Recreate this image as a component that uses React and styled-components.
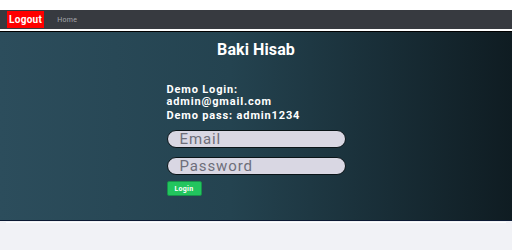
import React from "react";
import styled, { createGlobalStyle } from "styled-components";

const Global = createGlobalStyle`
  html, body {
    margin: 0;
    padding: 0;
    background: #f1f2f6;
    font-family: Roboto, "Liberation Sans", Arial, sans-serif;
  }
`;

const Top = styled.div`
  height: 10px;
  background: #ffffff;
`;

const Nav = styled.nav`
  height: 19px;
  background: #373a40;
  display: flex;
  align-items: center;
  padding: 0 7px;
  gap: 13px;
  border-bottom: 2px solid #ffffff;
`;

const LogoutButton = styled.button`
  background: #ff0000;
  color: #ffffff;
  border: none;
  height: 17px;
  padding: 0 2px;
  font-family: inherit;
  font-weight: 700;
  font-size: 10px;
  letter-spacing: 0.3px;
  cursor: pointer;
`;

const NavLink = styled.a`
  color: #a6a8ad;
  font-size: 7px;
  letter-spacing: 0.3px;
  text-decoration: none;
`;

const Hero = styled.section`
  height: 188px;
  background: linear-gradient(90deg, #2c4d5c 0%, #244350 45%, #0f1c22 100%);
  border-top: 1px solid #000000;
  border-bottom: 1px solid #0b1a33;
  display: flex;
  flex-direction: column;
  align-items: center;
  color: #ffffff;
`;

const Title = styled.h1`
  margin: 9px 0 0;
  font-size: 16px;
  font-weight: 700;
  line-height: 18px;
  letter-spacing: 0.1px;
`;

const Form = styled.form`
  width: 178px;
  margin: 25px 0 0 -1px;
  display: flex;
  flex-direction: column;
`;

const Info = styled.p`
  margin: 0 0 ${(p) => p.$gap}px;
  font-size: 11px;
  font-weight: 700;
  line-height: 12px;
  letter-spacing: 0.85px;
`;

const Field = styled.input`
  box-sizing: border-box;
  width: 179px;
  height: 18px;
  margin-top: ${(p) => p.$top}px;
  border-radius: 10px;
  border: 1px solid #0a1418;
  background: #d9d7e3;
  padding: 0 12px;
  font-family: inherit;
  font-size: 15px;
  letter-spacing: 0.9px;
  color: #333;
  outline: none;
  &::placeholder {
    color: #6e6e7a;
  }
`;

const Submit = styled.button`
  align-self: flex-start;
  margin-top: 6px;
  width: 35px;
  height: 15px;
  background: #22c55e;
  border: 1px solid #17934a;
  border-radius: 2px;
  color: #ffffff;
  font-family: inherit;
  font-size: 7px;
  font-weight: 700;
  letter-spacing: 0.3px;
  padding: 0;
`;

const Rule = styled.div`
  height: 1px;
  margin: 1px 6px 0;
  background: #ffffff;
  opacity: 0.8;
`;

export default function App() {
  return (
    <>
      <Global />
      <Top />
      <Nav>
        <LogoutButton>Logout</LogoutButton>
        <NavLink href="#">Home</NavLink>
      </Nav>
      <Hero>
        <Title>Baki Hisab</Title>
        <Form onSubmit={(e) => e.preventDefault()}>
          <Info $gap={2}>
            Demo Login:
            <br />
            admin@gmail.com
          </Info>
          <Info $gap={0}>Demo pass: admin1234</Info>
          <Field $top={8} placeholder="Email" />
          <Field $top={9} type="password" placeholder="Password" />
          <Submit>Login</Submit>
        </Form>
      </Hero>
      <Rule />
    </>
  );
}
